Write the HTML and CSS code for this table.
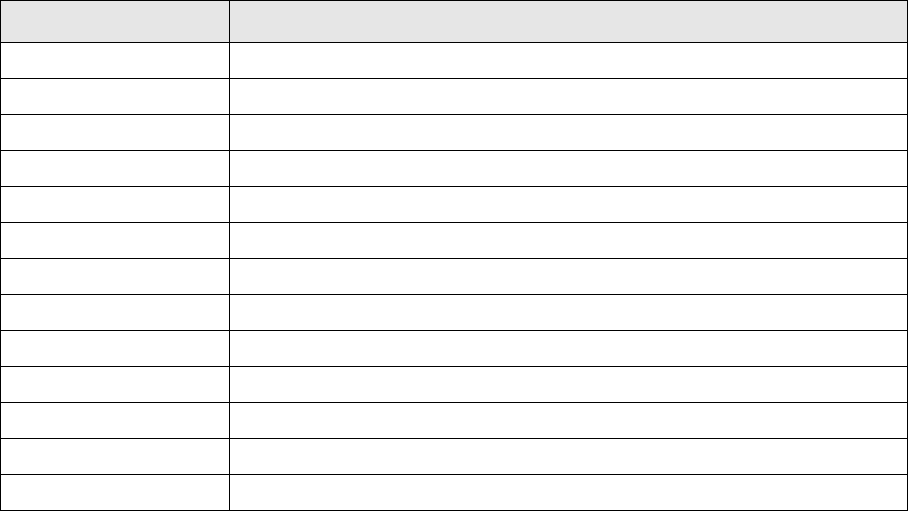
FILE: index.html
```html
<!DOCTYPE html>
<html>
<head>
<meta charset="utf-8">
<link rel="stylesheet" href="styles.css">
</head>
<body>
<table class="grid">
  <thead>
    <tr class="head-row"><th class="c1"></th><th class="c2"></th></tr>
  </thead>
  <tbody>
    <tr class="row"><td class="c1"></td><td class="c2"></td></tr>
    <tr class="row"><td class="c1"></td><td class="c2"></td></tr>
    <tr class="row"><td class="c1"></td><td class="c2"></td></tr>
    <tr class="row"><td class="c1"></td><td class="c2"></td></tr>
    <tr class="row"><td class="c1"></td><td class="c2"></td></tr>
    <tr class="row"><td class="c1"></td><td class="c2"></td></tr>
    <tr class="row"><td class="c1"></td><td class="c2"></td></tr>
    <tr class="row"><td class="c1"></td><td class="c2"></td></tr>
    <tr class="row"><td class="c1"></td><td class="c2"></td></tr>
    <tr class="row"><td class="c1"></td><td class="c2"></td></tr>
    <tr class="row"><td class="c1"></td><td class="c2"></td></tr>
    <tr class="row"><td class="c1"></td><td class="c2"></td></tr>
    <tr class="row"><td class="c1"></td><td class="c2"></td></tr>
  </tbody>
</table>
</body>
</html>
```
FILE: styles.css
```css
html, body {
  margin: 0;
  padding: 0;
  background: #ffffff;
  font-family: "Liberation Sans", Arial, sans-serif;
  font-size: 13px;
}
.grid {
  border-collapse: separate;
  border-spacing: 0;
  border-top: 1px solid #000;
  border-left: 1px solid #000;
  width: 908px;
  table-layout: fixed;
}
.grid th, .grid td {
  box-sizing: border-box;
  padding: 0;
  border-right: 1px solid #000;
  border-bottom: 1px solid #000;
}
.grid th {
  background: #e6e6e6;
  height: 42px;
}
.grid td {
  height: 36px;
}
.c1 {
  width: 229px;
}
```
